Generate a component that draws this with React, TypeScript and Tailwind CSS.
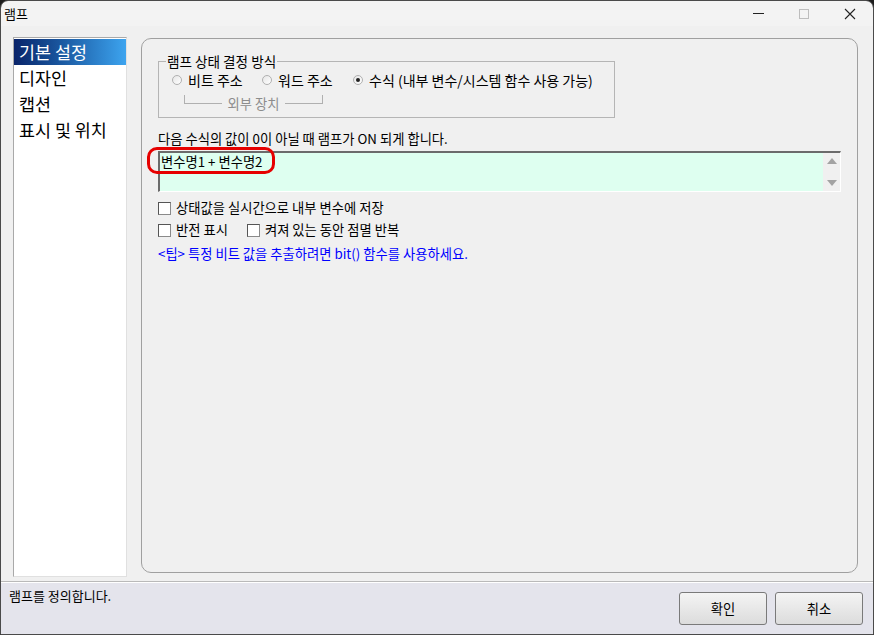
import React from "react";

const FONT = { fontFamily: '"Noto Sans CJK KR", "Noto Sans", sans-serif' };

function Radio({ checked, label, className = "" }: { checked?: boolean; label: string; className?: string }) {
  return (
    <div className={`flex items-center gap-[6px] whitespace-nowrap shrink-0 ${className}`}>
      <span className="w-[10px] h-[10px] shrink-0 rounded-full border border-[#b0b0b0] bg-gradient-to-br from-[#e6e6e6] to-white flex items-center justify-center">
        {checked && <span className="w-[4px] h-[4px] rounded-full bg-[#222]" />}
      </span>
      <span>{label}</span>
    </div>
  );
}

function Check({ label }: { label: string }) {
  return (
    <div className="flex items-center gap-[5px] whitespace-nowrap">
      <span className="w-[13px] h-[13px] bg-white border border-[#8a8a8a] border-t-[#555] border-l-[#555]" />
      <span>{label}</span>
    </div>
  );
}

export default function App() {
  const menu = ["기본 설정", "디자인", "캡션", "표시 및 위치"];

  return (
    <div className="w-[874px] h-[635px] bg-[#1c1c1c]" style={FONT}>
      <div className="w-full h-full flex flex-col rounded-t-[8px] overflow-hidden border border-[#4a4a4a] text-[13.3px] text-black">
        {/* title bar */}
        <div className="h-[25px] shrink-0 bg-[#f3f3f3] flex items-center justify-between pl-[3px]">
          <span className="text-[13px] leading-none">램프</span>
          <div className="flex items-center h-full">
            <div className="w-[46px] h-full flex items-center justify-center">
              <span className="w-[11px] h-[1px] bg-[#222]" />
            </div>
            <div className="w-[46px] h-full flex items-center justify-center">
              <span className="w-[10px] h-[10px] border border-[#bdbdbd]" />
            </div>
            <div className="w-[46px] h-full flex items-center justify-center">
              <svg width="12" height="12" viewBox="0 0 12 12">
                <path d="M1 1L11 11M11 1L1 11" stroke="#222" strokeWidth="1.1" />
              </svg>
            </div>
          </div>
        </div>

        {/* body */}
        <div className="flex-1 bg-[#f0f0f0] flex gap-[14px] pl-[12px] pr-[15px] pt-[11px] pb-[4px]">
          <div className="w-[114px] shrink-0 bg-white border border-[#a9a9a9] border-b-[#e0e0e0] border-r-[#e0e0e0] pt-px">
            {menu.map((m, i) => (
              <div
                key={m}
                className={`h-[26px] flex items-center pl-[5px] text-[17.4px] leading-none whitespace-nowrap ${
                  i === 0 ? "bg-gradient-to-r from-[#0a246a] to-[#3da4ef] text-white" : ""
                }`}
              >
                {m}
              </div>
            ))}
          </div>

          <div className="flex-1 mt-px mb-[4px] rounded-[10px] border border-[#a0a0a0] pl-[16px] pr-[16px] pt-[14px] flex flex-col">
            <fieldset className="w-[457px] border border-[#b5b5b5] pl-[13px] pr-[8px] pb-[4px] pt-0">
              <legend className="px-[1px] ml-[-6px] leading-[16px] text-[13.6px] whitespace-nowrap">램프 상태 결정 방식</legend>
              <div className="flex items-center h-[22px] text-[14px]">
                <Radio label="비트 주소" className="w-[90px]" />
                <Radio label="워드 주소" className="w-[91px]" />
                <Radio checked label="수식 (내부 변수/시스템 함수 사용 가능)" />
              </div>
              <div className="flex items-end ml-[12px] w-[139px] h-[16px] mb-[2px] mt-[4px]">
                <div className="flex-1 h-[9px] border-l border-b border-[#b0b0b0] self-start" />
                <span className="px-[6px] text-[#8c8c8c] leading-none translate-y-[-1px] whitespace-nowrap">외부 장치</span>
                <div className="flex-1 h-[9px] border-r border-b border-[#b0b0b0] self-start" />
              </div>
            </fieldset>

            <div className="mt-[12px] leading-[18px]">다음 수식의 값이 0이 아닐 때 램프가 ON 되게 합니다.</div>

            <div className="relative mt-[3px] h-[41px] flex border-t-2 border-l-2 border-[#6b6b6b] border-b border-r border-b-white border-r-white">
              <div className="flex-1 bg-[#defff0] pl-px leading-[18px]">변수명1 + 변수명2</div>
              <div className="w-[17px] bg-[#f0f0f0] flex flex-col items-center justify-between py-[5px]">
                <svg width="10" height="6" viewBox="0 0 10 6">
                  <path d="M0 6L5 0L10 6Z" fill="#a3a3a3" />
                </svg>
                <svg width="10" height="6" viewBox="0 0 10 6">
                  <path d="M0 0L5 6L10 0Z" fill="#a3a3a3" />
                </svg>
              </div>
              <div className="absolute left-[-13px] top-[-6px] w-[128px] h-[27px] rounded-[10px] border-[3px] border-[#e60000]" />
            </div>

            <div className="mt-[7px] flex flex-col gap-[4px] leading-[18px]">
              <Check label="상태값을 실시간으로 내부 변수에 저장" />
              <div className="flex items-center gap-[19px]">
                <Check label="반전 표시" />
                <Check label="켜져 있는 동안 점멸 반복" />
              </div>
              <div className="mt-[2px] text-[#0000ff]">&lt;팁&gt; 특정 비트 값을 추출하려면 bit() 함수를 사용하세요.</div>
            </div>
          </div>
        </div>

        {/* status / buttons */}
        <div className="h-[53px] shrink-0 bg-[#e4e4ec] border-t border-[#b9b9b9] shadow-[inset_0_1px_0_#ffffff] flex items-start justify-between pl-[8px] pr-[10px]">
          <span className="mt-[5px] leading-[18px] text-[13px]">램프를 정의합니다.</span>
          <div className="flex gap-[8px] mt-[10px]">
            {["확인", "취소"].map((b) => (
              <button
                key={b}
                className="w-[88px] h-[33px] rounded-[3px] border border-[#7a7a7a] bg-gradient-to-b from-[#f4f4f4] to-[#dcdcdc] flex items-center justify-center leading-none"
              >
                {b}
              </button>
            ))}
          </div>
        </div>
      </div>
    </div>
  );
}
